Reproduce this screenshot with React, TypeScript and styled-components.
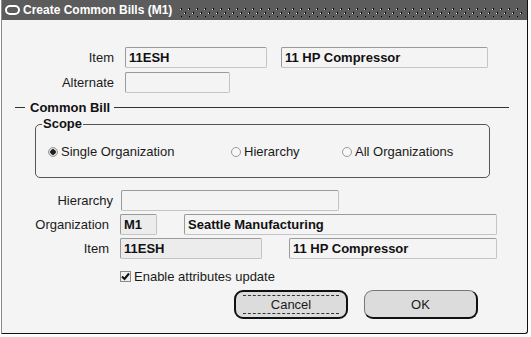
import styled, { createGlobalStyle } from 'styled-components'

const Global = createGlobalStyle`
  html, body {
    margin: 0;
    padding: 0;
    background: #ffffff;
  }
  body {
    font-family: "Liberation Sans", Arial, sans-serif;
    font-size: 13px;
    color: #111;
  }
`

const App = () => {
  return (
    <>
      <Global />
      <Window>
        <TitleBar>
          <TitleIcon />
          <Title>Create Common Bills (M1)</Title>
          <Grip>
            <svg width="100%" height="20">
              <defs>
                <pattern id="dots" width="8" height="8" patternUnits="userSpaceOnUse">
                  <rect x="0" y="1" width="1" height="1" fill="#e8e8e8" />
                  <rect x="1" y="0" width="1" height="1" fill="#000000" />
                  <rect x="1" y="1" width="1" height="1" fill="#111111" />
                  <rect x="4" y="5" width="1" height="1" fill="#e8e8e8" />
                  <rect x="5" y="4" width="1" height="1" fill="#000000" />
                  <rect x="5" y="5" width="1" height="1" fill="#111111" />
                </pattern>
              </defs>
              <rect x="0" y="6" width="100%" height="11" fill="url(#dots)" />
            </svg>
          </Grip>
        </TitleBar>

        <Body>
          <TopFields>
            <Row>
              <Label w={112}>Item</Label>
              <Field w={142}>11ESH</Field>
              <Field w={207} ml={14}>11 HP Compressor</Field>
            </Row>
            <Row>
              <Label w={112}>Alternate</Label>
              <Field w={105} />
            </Row>
          </TopFields>

          <Section>
            <SectionLine w={10} />
            <SectionTitle>Common Bill</SectionTitle>
            <SectionLine grow />
          </Section>

          <Scope>
            <Legend>Scope</Legend>
            <RadioRow>
              <RadioOption w={183}>
                <Radio checked />
                Single Organization
              </RadioOption>
              <RadioOption w={111}>
                <Radio />
                Hierarchy
              </RadioOption>
              <RadioOption>
                <Radio />
                All Organizations
              </RadioOption>
            </RadioRow>
          </Scope>

          <LowerFields>
            <Row>
              <Label w={111}>Hierarchy</Label>
              <Field w={218} ml={8} />
            </Row>
            <Row>
              <Label w={107}>Organization</Label>
              <Field w={37} ml={11} shade>M1</Field>
              <Field w={313} ml={27}>Seattle Manufacturing</Field>
            </Row>
            <Row>
              <Label w={107}>Item</Label>
              <Field w={142} ml={11} shade>11ESH</Field>
              <Field w={208} ml={27}>11 HP Compressor</Field>
            </Row>
          </LowerFields>

          <CheckRow>
            <CheckBox>
              <svg width="9" height="9" viewBox="0 0 9 9">
                <path d="M1 4.5 L3.5 7 L8 1.5" stroke="#111" strokeWidth="2" fill="none" />
              </svg>
            </CheckBox>
            Enable attributes update
          </CheckRow>

          <Buttons>
            <Button focused>
              <FocusRing>Cancel</FocusRing>
            </Button>
            <Button>OK</Button>
          </Buttons>
        </Body>
      </Window>
    </>
  )
}

export default App

const Window = styled.div`
  width: 527px;
  height: 334px;
  margin-left: 1px;
  box-sizing: border-box;
  background: #f4f4f4;
  border-left: 1px solid #8a8a8a;
  border-right: 1px solid #111;
  border-bottom: 1px solid #111;
  border-bottom-right-radius: 3px;
  display: flex;
  flex-direction: column;
  overflow: hidden;
`

const TitleBar = styled.div`
  height: 20px;
  background: #5c5c5c;
  display: flex;
  align-items: center;
  flex-shrink: 0;
`

const TitleIcon = styled.div`
  width: 11px;
  height: 6px;
  border: 2px solid #ffffff;
  border-radius: 5px;
  margin-left: 3px;
  margin-right: 3px;
`

const Title = styled.div`
  color: #ffffff;
  font-weight: bold;
  font-size: 12px;
  white-space: nowrap;
`

const Grip = styled.div`
  flex: 1;
  height: 20px;
  margin-left: 8px;
  margin-right: 3px;
`

const Body = styled.div`
  flex: 1;
  display: flex;
  flex-direction: column;
`

const TopFields = styled.div`
  display: flex;
  flex-direction: column;
  gap: 3px;
  margin-top: 26px;
`

const LowerFields = styled.div`
  display: flex;
  flex-direction: column;
  gap: 2px;
  margin-top: 11px;
`

const Row = styled.div`
  display: flex;
  align-items: center;
  height: 22px;
`

const Label = styled.div<{ w: number }>`
  width: ${({ w }) => w}px;
  text-align: right;
  font-size: 13px;
  color: #1a1a1a;
  flex-shrink: 0;
`

const Field = styled.div<{ w: number; ml?: number; shade?: boolean }>`
  width: ${({ w }) => w}px;
  height: 21px;
  box-sizing: border-box;
  margin-left: ${({ ml }) => (ml === undefined ? 11 : ml)}px;
  background: ${({ shade }) => (shade ? '#ececec' : '#f4f4f4')};
  border: 1px solid #c4c4c4;
  border-top-color: #9a9a9a;
  border-left-color: #9a9a9a;
  border-radius: 2px;
  padding-left: 3px;
  font-weight: bold;
  font-size: 13px;
  line-height: 19px;
  white-space: nowrap;
  overflow: hidden;
`

const Section = styled.div`
  display: flex;
  align-items: center;
  margin-top: 7px;
  margin-left: 13px;
  margin-right: 18px;
`

const SectionLine = styled.div<{ w?: number; grow?: boolean }>`
  height: 1px;
  background: #333;
  width: ${({ w }) => (w ? `${w}px` : 'auto')};
  flex: ${({ grow }) => (grow ? 1 : 'none')};
`

const SectionTitle = styled.div`
  font-weight: bold;
  font-size: 13px;
  margin: 0 4px 0 5px;
`

const Scope = styled.fieldset`
  margin: 3px 0 0 33px;
  width: 455px;
  height: 60px;
  box-sizing: border-box;
  border: 1px solid #555;
  border-radius: 5px;
  padding: 0 0 0 12px;
`

const Legend = styled.legend`
  font-weight: bold;
  font-size: 13px;
  padding: 0 1px;
  margin-left: -6px;
  line-height: 12px;
`

const RadioRow = styled.div`
  display: flex;
  align-items: center;
  margin-top: 14px;
`

const RadioOption = styled.div<{ w?: number }>`
  display: flex;
  align-items: center;
  width: ${({ w }) => (w ? `${w}px` : 'auto')};
  font-size: 13px;
  color: #1a1a1a;
`

const Radio = styled.span<{ checked?: boolean }>`
  width: 8px;
  height: 8px;
  border-radius: 50%;
  border: 1px solid #9a9a9a;
  background: ${({ checked }) =>
    checked ? 'radial-gradient(circle, #222 0 2.5px, #dcdcdc 3px)' : '#f8f8f8'};
  margin-right: 3px;
  flex-shrink: 0;
`

const CheckRow = styled.div`
  display: flex;
  align-items: center;
  margin: 10px 0 0 118px;
  font-size: 13px;
  color: #1a1a1a;
`

const CheckBox = styled.span`
  width: 11px;
  height: 11px;
  box-sizing: border-box;
  border: 1px solid #8a8a8a;
  background: #f0f0f0;
  display: flex;
  align-items: center;
  justify-content: center;
  margin-right: 3px;
`

const Buttons = styled.div`
  display: flex;
  gap: 16px;
  margin: 6px 0 0 232px;
`

const Button = styled.div<{ focused?: boolean }>`
  width: 114px;
  height: 29px;
  box-sizing: border-box;
  border-radius: 9px;
  background: #dcdcdc;
  border: ${({ focused }) => (focused ? '2px solid #111' : '1px solid #777')};
  border-right: 2px solid #111;
  border-bottom: 2px solid #111;
  display: flex;
  align-items: center;
  justify-content: center;
  font-size: 13px;
  color: #1a1a1a;
`

const FocusRing = styled.div`
  width: 96px;
  height: 19px;
  box-sizing: border-box;
  border-top: 1px dashed #333;
  border-bottom: 1px dashed #333;
  display: flex;
  align-items: center;
  justify-content: center;
`
